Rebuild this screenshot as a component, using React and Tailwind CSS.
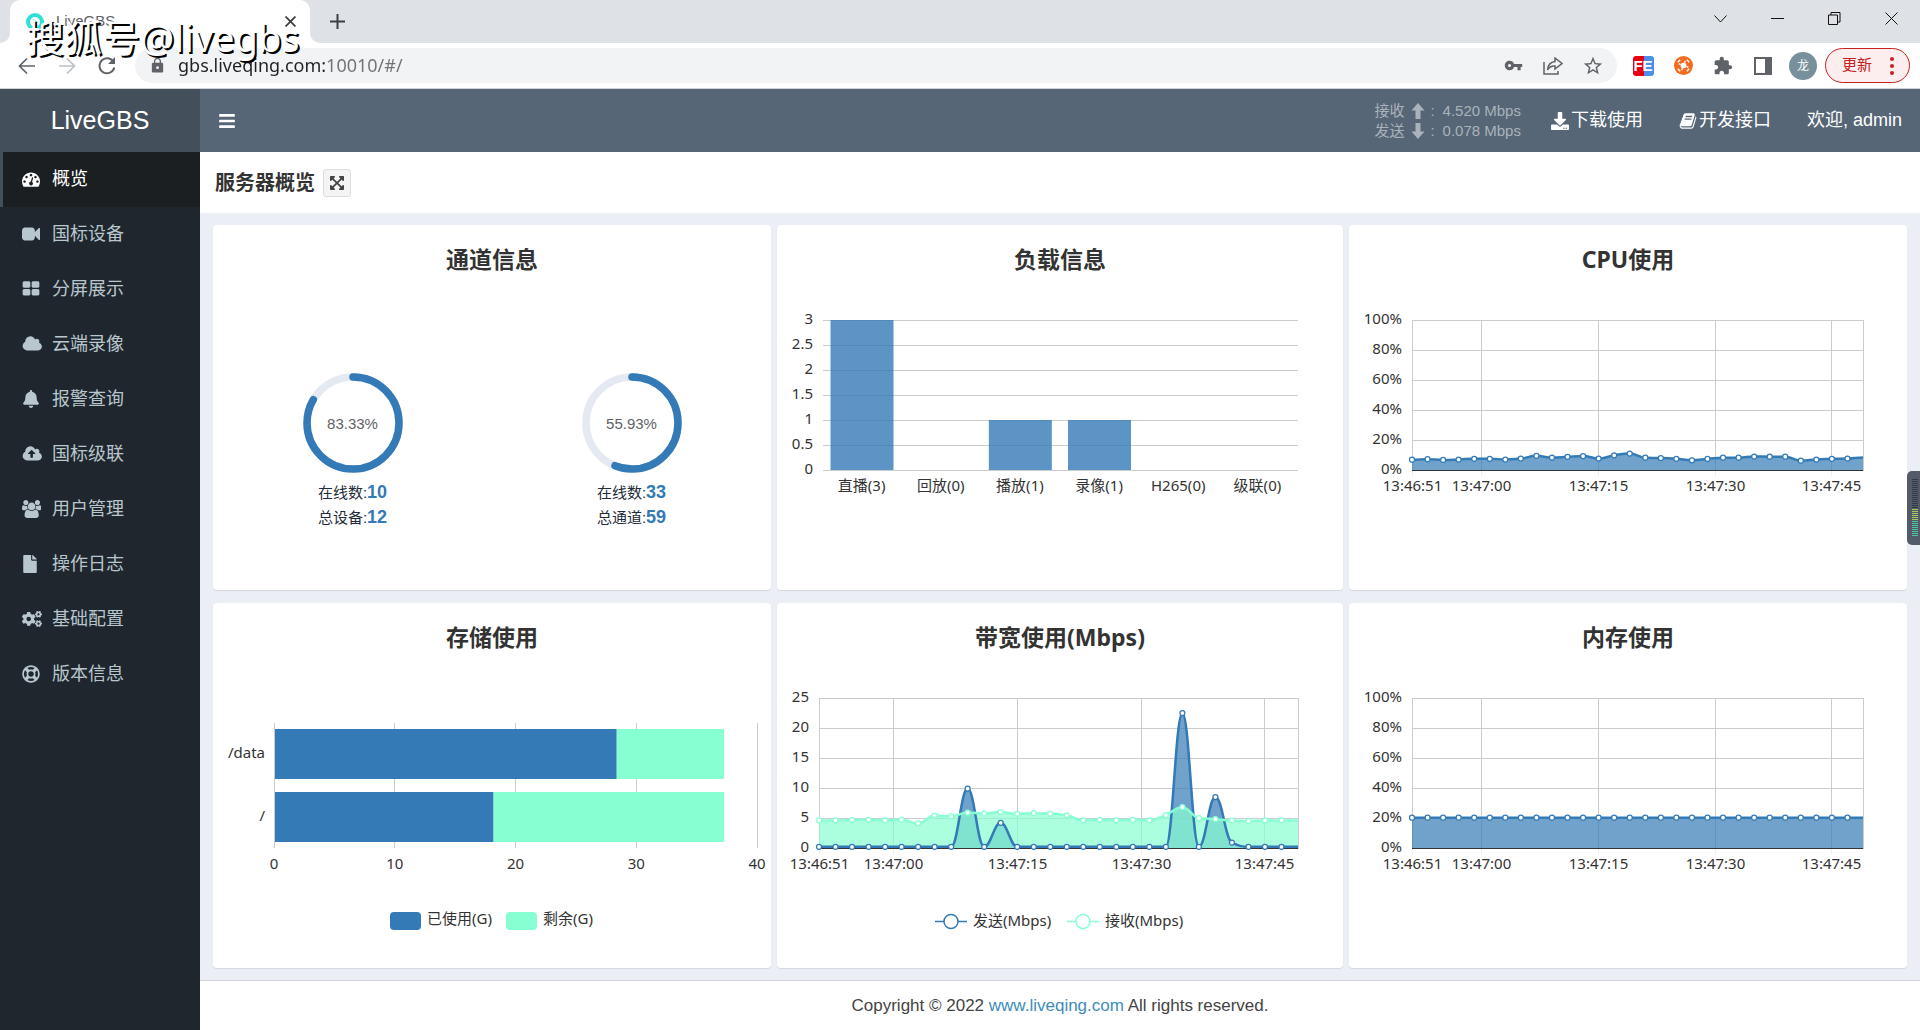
import { FaBars, FaBell, FaCogs, FaDownload, FaExpandArrowsAlt, FaFile, FaRegLifeRing } from "react-icons/fa";
import { MdExtension, MdLock, MdStarBorder, MdVpnKey } from "react-icons/md";

const BLUE = "#337ab7";
const MINT = "#87ffd2";
const GRID = "#cccccc";

/* ---------- Icons ---------- */

const CLOUD =
  "M1984 1152q0 159-112.5 271.5t-271.5 112.5h-1088q-185 0-316.5-131.5t-131.5-316.5q0-132 71-241.5t187-163.5q-2-28-2-43 0-212 150-362t362-150q158 0 286.5 88t187.5 230q70-62 166-62 106 0 181 75t75 181q0 75-41 138 129 30 213 134.5t84 239.5z";

const PATHS = {
  dashboard:
    "M384 1152q0-53-37.5-90.5t-90.5-37.5-90.5 37.5-37.5 90.5 37.5 90.5 90.5 37.5 90.5-37.5 37.5-90.5zm192-448q0-53-37.5-90.5t-90.5-37.5-90.5 37.5-37.5 90.5 37.5 90.5 90.5 37.5 90.5-37.5 37.5-90.5zm428 481l101-382q6-26-7.5-48.5t-38.5-29.5-48 6.5-30 39.5l-101 382q-60 5-107 43.5t-63 98.5q-20 77 20 146t117 89 146-20 89-117q16-60-6-117t-72-91zm660-33q0-53-37.5-90.5t-90.5-37.5-90.5 37.5-37.5 90.5 37.5 90.5 90.5 37.5 90.5-37.5 37.5-90.5zm-640-640q0-53-37.5-90.5t-90.5-37.5-90.5 37.5-37.5 90.5 37.5 90.5 90.5 37.5 90.5-37.5 37.5-90.5zm448 192q0-53-37.5-90.5t-90.5-37.5-90.5 37.5-37.5 90.5 37.5 90.5 90.5 37.5 90.5-37.5 37.5-90.5zm320 448q0 261-141 483-19 29-54 29h-1402q-35 0-54-29-141-221-141-483 0-182 71-348t191-286 286-191 348-71 348 71 286 191 191 286 71 348z",
  video:
    "M1792 352v1088q0 42-39 59-13 5-25 5-27 0-45-19l-403-403v166q0 119-84.5 203.5t-203.5 84.5h-704q-119 0-203.5-84.5t-84.5-203.5v-704q0-119 84.5-203.5t203.5-84.5h704q119 0 203.5 84.5t84.5 203.5v165l403-402q18-19 45-19 12 0 25 5 39 17 39 59z",
  thLarge:
    "M832 1024v384q0 52-38 90t-90 38h-512q-52 0-90-38t-38-90v-384q0-52 38-90t90-38h512q52 0 90 38t38 90zm0-768v384q0 52-38 90t-90 38h-512q-52 0-90-38t-38-90v-384q0-52 38-90t90-38h512q52 0 90 38t38 90zm896 768v384q0 52-38 90t-90 38h-512q-52 0-90-38t-38-90v-384q0-52 38-90t90-38h512q52 0 90 38t38 90zm0-768v384q0 52-38 90t-90 38h-512q-52 0-90-38t-38-90v-384q0-52 38-90t90-38h512q52 0 90 38t38 90z",
  cloud: CLOUD,
  cloudUpload:
    "M1344 864q0-14-9-23l-352-352q-9-9-23-9t-23 9l-351 351q-10 12-10 24 0 14 9 23t23 9h224v352q0 13 9.5 22.5t22.5 9.5h192q13 0 22.5-9.5t9.5-22.5v-352h224q13 0 22.5-9.5t9.5-22.5z" +
    CLOUD,
  users:
    "M593 896q-162 5-265 128h-134q-82 0-138-40.5t-56-118.5q0-353 124-353 6 0 43.5 21t97.5 42.5 119 21.5q67 0 133-23-5 37-5 66 0 139 81 256zm1071 637q0 120-73 189.5t-194 69.5h-874q-121 0-194-69.5t-73-189.5q0-53 3.5-103.5t14-109 26.5-108.5 43-97.5 62-81 85.5-53.5 111.5-20q10 0 43 21.5t73 48 107 48 135 21.5 135-21.5 107-48 73-48 43-21.5q61 0 111.5 20t85.5 53.5 62 81 43 97.5 26.5 108.5 14 109 3.5 103.5zm-1024-1277q0 106-75 181t-181 75-181-75-75-181 75-181 181-75 181 75 75 181zm704 384q0 159-112.5 271.5t-271.5 112.5-271.5-112.5-112.5-271.5 112.5-271.5 271.5-112.5 271.5 112.5 112.5 271.5zm576 225q0 78-56 118.5t-138 40.5h-134q-103-123-265-128 81-117 81-256 0-29-5-66 66 23 133 23 59 0 119-21.5t97.5-42.5 43.5-21q124 0 124 353zm-128-609q0 106-75 181t-181 75-181-75-75-181 75-181 181-75 181 75 75 181z",
  book: "M1703 478q40 57 18 129l-275 906q-19 64-76.5 107.5t-122.5 43.5h-923q-77 0-148.5-53.5t-99.5-131.5q-24-67-2-127 0-4 3-27t4-37q1-8-3-21.5t-3-19.5q2-11 8-21t16.5-23.5 16.5-23.5q23-38 45-91.5t30-91.5q3-10 .5-30t-.5-28q3-11 17-28t17-23q21-36 42-92t25-90q1-9-2.5-32t.5-28q4-13 22-30.5t22-22.5q19-26 42.5-84.5t27.5-96.5q1-8-3-25.5t-2-26.5q2-8 9-18t18-23 17-21q8-12 16.5-30.5t15-35 16-36 19.5-32 26.5-23.5 36-11.5 47.5 5.5l-1 3q38-9 51-9h761q74 0 114 56t18 130l-274 906q-36 119-71.5 153.5t-128.5 34.5h-869q-27 0-38 15-11 16-1 43 24 70 144 70h923q29 0 56-15.5t35-41.5l300-987q7-22 5-57 38 15 59 43zm-1064 2q-4 13 2 22.5t20 9.5h608q13 0 25.5-9.5t16.5-22.5l21-64q4-13-2-22.5t-20-9.5h-608q-13 0-25.5 9.5t-16.5 22.5zm-83 256q-4 13 2 22.5t20 9.5h608q13 0 25.5-9.5t16.5-22.5l21-64q4-13-2-22.5t-20-9.5h-608q-13 0-25.5 9.5t-16.5 22.5z",
};

const Glyph = ({ name, wide = 1792, className = "h-[18px]" }) => (
  <svg viewBox={`0 0 ${wide} 1792`} fill="currentColor" fillRule="evenodd" className={className} aria-hidden="true">
    <path d={PATHS[name]} />
  </svg>
);

const FatArrow = ({ down = false }) => (
  <svg viewBox="0 0 14 16" fill="currentColor" className={down ? "h-4 w-3.5 rotate-180" : "h-4 w-3.5"} aria-hidden="true">
    <path d="M7 0L13.5 7.5H9.5V16H4.5V7.5H.5Z" />
  </svg>
);

/* ---------- Browser frame ---------- */

const WINDOW_BUTTONS = [
  { label: "搜索标签页", d: "M.5 3.5L6.5 10L12.5 3.5" },
  { label: "最小化", d: "M0 6.5H13" },
  { label: "还原", d: "M.5 3H9.5V12.5H.5ZM3 3V.5H12V10H9.5" },
  { label: "关闭", d: "M.5 .5L12.5 12.5M12.5 .5L.5 12.5" },
];

const TabStrip = () => (
  <div className="flex h-[43px] items-stretch bg-[#dee1e6]">
    <span className="w-2.5 bg-white">
      <span className="block h-full rounded-br-[10px] bg-[#dee1e6]" />
    </span>
    <div className="flex w-[300px] items-center rounded-t-[10px] bg-white pr-2.5 pl-4">
      <svg viewBox="0 0 18 18" className="h-[18px] w-[18px]" aria-hidden="true">
        <circle cx="9" cy="9" r="7" fill="none" stroke="#2ee0d8" strokeWidth="4" />
        <path d="M7 6L12 9L7 12Z" fill="#2ee0d8" />
      </svg>
      <span className="ml-3 flex-1 text-[15px] text-[#5f6368]">LiveGBS</span>
      <button aria-label="关闭标签页" className="flex h-5 w-5 items-center justify-center">
        <svg viewBox="0 0 10 10" className="h-[11px] w-[11px]" stroke="#3c4043" strokeWidth="1.6">
          <path d="M.5 .5L9.5 9.5M9.5 .5L.5 9.5" />
        </svg>
      </button>
    </div>
    <span className="w-2.5 bg-white">
      <span className="block h-full rounded-bl-[10px] bg-[#dee1e6]" />
    </span>
    <button aria-label="新标签页" className="flex w-[34px] items-center justify-center">
      <svg viewBox="0 0 15 15" className="h-[15px] w-[15px]" stroke="#3c4043" strokeWidth="2">
        <path d="M7.5 0V15M0 7.5H15" />
      </svg>
    </button>
    <div className="ml-auto flex h-[37px]">
      {WINDOW_BUTTONS.map((b) => (
        <button key={b.label} aria-label={b.label} className="flex w-[57px] items-center justify-center">
          <svg viewBox="0 0 13 13" className="h-[13px] w-[13px]" fill="none" stroke="#111" strokeWidth="1">
            <path d={b.d} />
          </svg>
        </button>
      ))}
    </div>
  </div>
);

const ToolButton = ({ label, children }) => (
  <button aria-label={label} className="flex h-9 w-10 shrink-0 items-center justify-center text-[#5f6368]">
    {children}
  </button>
);

const Toolbar = () => (
  <div className="flex h-[46px] items-center border-b border-[#d0d2d5] bg-white pr-2.5 pl-[7px]">
    <ToolButton label="后退">
      <svg viewBox="0 0 18 18" className="h-[18px] w-[18px]" fill="none" stroke="currentColor" strokeWidth="1.7">
        <path d="M17 9H2M9 1.5L1.5 9L9 16.5" />
      </svg>
    </ToolButton>
    <ToolButton label="前进">
      <svg viewBox="0 0 18 18" className="h-[18px] w-[18px]" fill="none" stroke="#bdc1c6" strokeWidth="1.7">
        <path d="M1 9H16M9 1.5L16.5 9L9 16.5" />
      </svg>
    </ToolButton>
    <ToolButton label="重新加载">
      <svg viewBox="0 0 18 18" className="h-[18px] w-[18px]" fill="none" stroke="currentColor" strokeWidth="2">
        <path d="M15.5 5A7.5 7.5 0 1 0 16.3 10.5" />
        <path d="M17 0V7H10Z" fill="currentColor" stroke="none" />
      </svg>
    </ToolButton>
    <div className="ml-2 flex h-[35px] flex-1 items-center rounded-full bg-[#f1f3f4] pr-1 pl-3.5">
      <MdLock className="h-[17px] w-[17px] text-[#5f6368]" />
      <input
        aria-label="地址栏"
        defaultValue="gbs.liveqing.com:10010/#/"
        className="ml-3 min-w-0 flex-1 bg-[linear-gradient(90deg,#202124_147px,#6f7377_147px)] bg-clip-text font-['Noto_Sans','Noto_Sans_CJK_SC',sans-serif] text-[18px] text-transparent outline-none"
      />
      <ToolButton label="密码">
        <MdVpnKey className="h-[19px] w-[19px]" />
      </ToolButton>
      <ToolButton label="分享">
        <svg viewBox="0 0 20 18" className="h-[18px] w-5" fill="none" stroke="currentColor" strokeWidth="1.5">
          <path d="M1 5V17H15V14M12 1L19 6.5L12 12V9Q7 8.5 4.5 13Q5 5.5 12 4.5Z" />
        </svg>
      </ToolButton>
      <ToolButton label="收藏">
        <MdStarBorder className="h-[22px] w-[22px]" />
      </ToolButton>
    </div>
    <div className="ml-1.5 flex">
      <ToolButton label="FE助手">
        <span className="flex h-5 w-[21px] items-center justify-center rounded-[3px] bg-[linear-gradient(90deg,#e60012_50%,#4a90e8_50%)] text-[15px] leading-none font-bold text-white">
          FE
        </span>
      </ToolButton>
      <ToolButton label="扩展">
        <svg viewBox="0 0 20 20" className="h-[19px] w-[19px]">
          <circle cx="10" cy="10" r="10" fill="#f26b21" />
          <circle cx="10" cy="10" r="3" fill="#fff" />
          <path
            d="M4 6.5L6.5 4M13.5 4L16 6.5M4 13.5L6.5 16M13.5 16L16 13.5M5 8L7 9M15 12L13 11M12 5L11 7M8 15L9 13"
            stroke="#fff"
            strokeWidth="1.5"
          />
        </svg>
      </ToolButton>
      <ToolButton label="扩展程序">
        <MdExtension className="h-5 w-5" />
      </ToolButton>
      <ToolButton label="侧边栏">
        <svg viewBox="0 0 18 18" className="h-[18px] w-[18px]" fill="none" stroke="currentColor" strokeWidth="2">
          <path d="M1 1H17V17H1Z" />
          <path d="M12 1H17V17H12Z" fill="currentColor" />
        </svg>
      </ToolButton>
      <ToolButton label="用户">
        <span className="flex h-7 w-7 items-center justify-center rounded-full bg-[#78909c] text-[12px] text-white">龙</span>
      </ToolButton>
    </div>
    <button className="ml-0.5 flex h-[35px] w-[85px] items-center gap-[18px] rounded-full border border-[#c5221f] bg-[#fceeee] pl-4 text-[15px] text-[#c5221f]">
      更新
      <svg viewBox="0 0 4 18" className="h-[18px] w-1" fill="currentColor" aria-hidden="true">
        <circle cx="2" cy="2" r="2" />
        <circle cx="2" cy="9" r="2" />
        <circle cx="2" cy="16" r="2" />
      </svg>
    </button>
  </div>
);

/* ---------- Sidebar ---------- */

const MENU = [
  { label: "概览", icon: <Glyph name="dashboard" />, active: true },
  { label: "国标设备", icon: <Glyph name="video" /> },
  { label: "分屏展示", icon: <Glyph name="thLarge" /> },
  { label: "云端录像", icon: <Glyph name="cloud" wide={2048} /> },
  { label: "报警查询", icon: <FaBell className="h-[18px] w-[18px]" /> },
  { label: "国标级联", icon: <Glyph name="cloudUpload" wide={2048} /> },
  { label: "用户管理", icon: <Glyph name="users" wide={1920} /> },
  { label: "操作日志", icon: <FaFile className="h-[18px] w-4" /> },
  { label: "基础配置", icon: <FaCogs className="h-[18px] w-5" /> },
  { label: "版本信息", icon: <FaRegLifeRing className="h-[18px] w-[18px]" /> },
];

const Sidebar = () => (
  <aside className="w-[200px] shrink-0 bg-[#20262d]">
    <a href="#/" className="flex h-[63px] items-center justify-center bg-[#434f5a] text-[25px] text-white">
      LiveGBS
    </a>
    <nav>
      <ul>
        {MENU.map((m) => (
          <li key={m.label}>
            <a
              href="#/"
              className={
                m.active
                  ? "flex h-[55px] items-center border-l-3 border-[#434f5a] bg-[#1b1f22] pl-[19px] text-[18px] text-white"
                  : "flex h-[55px] items-center border-l-3 border-transparent pl-[19px] text-[18px] text-[#b8c7ce]"
              }
            >
              <span className="w-[30px] pb-0.5">{m.icon}</span>
              {m.label}
            </a>
          </li>
        ))}
      </ul>
    </nav>
  </aside>
);

/* ---------- Top bar ---------- */

const RateRow = ({ label, down, value }) => (
  <div className="flex items-center">
    <span>{label}</span>
    <span className="mx-1.5">
      <FatArrow down={down} />
    </span>
    <span className="w-3">:</span>
    <span>{value}</span>
  </div>
);

const TopBar = () => (
  <header className="flex h-[63px] items-center bg-[#566676] text-[18px] text-white">
    <button aria-label="切换菜单" className="flex h-full w-[53px] items-center justify-center">
      <FaBars className="h-[18px] w-[18px]" />
    </button>
    <div className="ml-auto text-[15px] leading-5 text-[#aab3bb]">
      <RateRow label="接收" value="4.520 Mbps" />
      <RateRow label="发送" down value="0.078 Mbps" />
    </div>
    <a href="#/" className="ml-3 flex items-center gap-0.5 px-[18px]">
      <FaDownload className="h-[18px] w-[18px]" />
      下载使用
    </a>
    <a href="#/" className="flex items-center gap-0.5 px-[18px]">
      <Glyph name="book" />
      开发接口
    </a>
    <a href="#/" className="px-[18px]">
      欢迎, admin
    </a>
  </header>
);

/* ---------- Charts ---------- */

const Card = ({ title, children }) => (
  <section className="flex h-[365px] flex-col rounded-[4px] bg-white shadow-[0_1px_1px_rgba(0,0,0,0.1)]">
    <h2 className="pb-0.5 text-center font-['Noto_Sans','Noto_Sans_CJK_SC',sans-serif] text-[23px] leading-[68px] font-bold text-[#333]">
      {title}
    </h2>
    {children}
  </section>
);

const Chart = ({ width, label, children }) => (
  <svg
    viewBox={`0 0 ${width} 295`}
    role="img"
    aria-label={label}
    className="min-h-0 w-full flex-1 fill-[#333] font-['Noto_Sans','Noto_Sans_CJK_SC',sans-serif] text-[15px]"
  >
    {children}
  </svg>
);

const ProgressRing = ({ percent }) => {
  const length = 2 * Math.PI * 46;
  return (
    <div className="grid h-[100px] w-[100px] place-items-center">
      <svg
        viewBox="0 0 100 100"
        className="col-start-1 row-start-1 -rotate-90"
        fill="none"
        strokeWidth="7.5"
        aria-hidden="true"
      >
        <circle cx="50" cy="50" r="46" stroke="#e5e9f2" />
        <circle
          cx="50"
          cy="50"
          r="46"
          stroke={BLUE}
          strokeLinecap="round"
          strokeDasharray={`${(length * percent) / 100} ${length}`}
        />
      </svg>
      <span className="col-start-1 row-start-1 text-[15px] text-[#606266]">{percent}%</span>
    </div>
  );
};

const RingBlock = ({ percent, online, totalLabel, total }) => (
  <div className="flex flex-col items-center text-[15px] leading-[25px] text-[#1f2d3d]">
    <ProgressRing percent={percent} />
    <p className="mt-[7px]">
      在线数:<b className="text-[18px] text-[#337ab7]">{online}</b>
    </p>
    <p>
      {totalLabel}:<b className="text-[18px] text-[#337ab7]">{total}</b>
    </p>
  </div>
);

const LOAD = [
  ["直播", 3],
  ["回放", 0],
  ["播放", 1],
  ["录像", 1],
  ["H265", 0],
  ["级联", 0],
];

const LoadChart = () => {
  const step = 475 / LOAD.length;
  return (
    <Chart width={566} label="负载信息">
      {[3, 2.5, 2, 1.5, 1, 0.5, 0].map((v, i) => (
        <g key={v}>
          <path d={`M46 ${25.5 + i * 25}H521`} stroke={GRID} />
          <text x="36" y={29 + i * 25} textAnchor="end">
            {v}
          </text>
        </g>
      ))}
      {LOAD.map(([name, count], i) => (
        <g key={name}>
          <rect x={53.5 + i * step} y={175 - count * 50} width="63" height={count * 50} fill={BLUE} opacity="0.8" />
          <text x={45 + step * (i + 0.5)} y="196" textAnchor="middle">
            {name}({count})
          </text>
        </g>
      ))}
    </Chart>
  );
};

// Cubic path that never overshoots its points
const smoothPath = (pts) => {
  const slope = pts.slice(1).map((p, i) => (p[1] - pts[i][1]) / (p[0] - pts[i][0]));
  const tangent = pts.map((_, i) => {
    const a = slope[i - 1] ?? 0;
    const b = slope[i] ?? 0;
    return a * b <= 0 ? 0 : (2 * a * b) / (a + b);
  });
  return pts
    .map(([x, y], i) => {
      if (i === 0) return `M${x} ${y}`;
      const [px, py] = pts[i - 1];
      const dx = (x - px) / 2.4;
      return `C${px + dx} ${py + tangent[i - 1] * dx} ${x - dx} ${y - tangent[i] * dx} ${x} ${y}`;
    })
    .join("");
};

// All areas go below all lines, so no line is tinted by a later area
const SeriesGroup = ({ series, left, right, max }) => {
  const drawn = series.map(({ color, data }) => {
    const pts = data.map((v, i) => [left + (i * (right - left)) / (data.length - 1), 175 - (v / max) * 150]);
    return { color, pts, line: smoothPath(pts) };
  });
  return (
    <g>
      {drawn.map(({ color, line }) => (
        <path key={color} d={`${line}V175H${left}Z`} fill={color} opacity="0.7" />
      ))}
      <path d={`M${left} 175.5H${right}`} stroke="#333" />
      {drawn.map(({ color, line, pts }) => (
        <g key={color} stroke={color}>
          <path d={line} fill="none" strokeWidth="2.5" />
          {pts.slice(0, -1).map(([x, y]) => (
            <circle key={x} cx={x} cy={y} r="2.5" fill="#fff" strokeWidth="1.25" />
          ))}
        </g>
      ))}
    </g>
  );
};

// Seconds after 13:46:51
const TIMES = [
  [0, "13:46:51"],
  [9, "13:47:00"],
  [24, "13:47:15"],
  [39, "13:47:30"],
  [54, "13:47:45"],
];

const TimeGrid = ({ left, right, labels }) => {
  const at = (s) => Math.floor(left + (s * (right - left)) / 58) + 0.5;
  const step = 150 / (labels.length - 1);
  return (
    <g>
      {labels.map((l, i) => (
        <g key={l}>
          <path d={`M${left} ${25.5 + i * step}H${right}`} stroke={GRID} />
          <text x={left - 10} y={29 + i * step} textAnchor="end">
            {l}
          </text>
        </g>
      ))}
      {TIMES.map(([s, t]) => (
        <g key={t}>
          <path d={`M${at(s)} 25V175`} stroke={GRID} />
          <path d={`M${at(s)} 176V181`} stroke="#eee" />
          <text x={at(s)} y="196" textAnchor="middle">
            {t}
          </text>
        </g>
      ))}
      <path d={`M${right + 0.5} 25V176`} stroke={GRID} />
    </g>
  );
};

const PERCENTS = ["100%", "80%", "60%", "40%", "20%", "0%"];
const CPU = [
  6.9, 7.2, 6.7, 7, 7.5, 7.5, 7, 7.6, 9.5, 8.3, 8.8, 9.3, 7.6, 9.8, 11, 8.2, 8, 7.5, 6.5, 7.4, 8.2, 8.2, 9, 8.9, 8.9, 6.2, 7,
  7.5, 7.6, 8.3,
];
const MEMORY = Array(30).fill(20.2);
const SEND = [
  0.2, 0.2, 0.2, 0.2, 0.2, 0.2, 0.2, 0.2, 0.2, 9.9, 0.2, 4.2, 0.2, 0.2, 0.2, 0.2, 0.2, 0.2, 0.2, 0.2, 0.2, 0.2, 22.5, 0.2, 8.5,
  0.9, 0.2, 0.2, 0.2, 0.2,
];
const RECEIVE = [
  4.6, 4.6, 4.65, 4.7, 4.6, 4.7, 4.1, 5.4, 5.3, 5.9, 5.75, 6, 5.7, 5.8, 5.7, 5.45, 4.6, 4.7, 4.6, 4.7, 4.6, 5.5, 6.8, 5, 4.8,
  4.6, 4.5, 4.6, 4.6, 4.6,
];

const PercentChart = ({ label, data }) => (
  <Chart width={558} label={label}>
    <TimeGrid left={63} right={514} labels={PERCENTS} />
    <SeriesGroup series={[{ color: BLUE, data }]} left={63} right={514} max={100} />
  </Chart>
);

const LineLegend = ({ x, color, children }) => (
  <g>
    <path d={`M${x} 248.5H${x + 32}`} stroke={color} strokeWidth="1.5" />
    <circle cx={x + 16} cy="248.5" r="7" fill="#fff" stroke={color} strokeWidth="1.5" />
    <text x={x + 38} y="253">
      {children}
    </text>
  </g>
);

const BandwidthChart = () => (
  <Chart width={566} label="带宽使用">
    <TimeGrid left={42} right={521} labels={["25", "20", "15", "10", "5", "0"]} />
    <SeriesGroup
      series={[
        { color: BLUE, data: SEND },
        { color: MINT, data: RECEIVE },
      ]}
      left={42}
      right={521}
      max={25}
    />
    <LineLegend x={158} color={BLUE}>
      发送(Mbps)
    </LineLegend>
    <LineLegend x={290} color={MINT}>
      接收(Mbps)
    </LineLegend>
  </Chart>
);

const DISKS = [
  { name: "/data", used: 28.3, free: 8.9 },
  { name: "/", used: 18.1, free: 19.1 },
];

const StorageChart = () => {
  const unit = 483 / 40;
  return (
    <Chart width={558} label="存储使用">
      {[0, 10, 20, 30, 40].map((v) => (
        <g key={v}>
          <path d={`M${Math.floor(61 + v * unit) + 0.5} 50V175`} stroke={GRID} />
          <text x={61 + v * unit} y="196" textAnchor="middle">
            {v}
          </text>
        </g>
      ))}
      {DISKS.map((d, i) => (
        <g key={d.name}>
          <rect x="62" y={56 + i * 63} width={d.used * unit} height="50" fill={BLUE} />
          <rect x={62 + d.used * unit} y={56 + i * 63} width={d.free * unit} height="50" fill={MINT} />
          <text x="52" y={85 + i * 63} textAnchor="end">
            {d.name}
          </text>
        </g>
      ))}
      <rect x="177" y="239" width="31" height="18" rx="4" fill={BLUE} />
      <text x="214" y="251">
        已使用(G)
      </text>
      <rect x="293" y="239" width="31" height="18" rx="4" fill={MINT} />
      <text x="330" y="251">
        剩余(G)
      </text>
    </Chart>
  );
};

/* ---------- Page ---------- */

const LevelMeter = () => (
  <div
    className="absolute top-[471px] right-0 flex h-[74px] w-[13px] flex-col gap-px rounded-l-[5px] bg-[#535a68] pt-2 pl-[5px]"
    aria-hidden="true"
  >
    {Array.from({ length: 29 }, (_, i) => (
      <span
        key={i}
        className={
          i < 15 ? "h-px w-1.5 bg-[#343947]" : i < 21 ? "h-px w-1.5 bg-[#a5c95a]" : "h-px w-1.5 bg-[#4cc5a5]"
        }
      />
    ))}
  </div>
);

export default function App() {
  return (
    <div className="relative flex min-h-screen flex-col bg-white font-['Liberation_Sans','Noto_Sans_CJK_SC',sans-serif] text-[#333]">
      <TabStrip />
      <Toolbar />
      <div className="flex flex-1">
        <Sidebar />
        <div className="flex min-w-0 flex-1 flex-col bg-[#ebeef4]">
          <TopBar />
          <div className="flex h-[61px] items-center gap-2 bg-white px-[15px]">
            <h1 className="text-[20px] font-bold">服务器概览</h1>
            <button
              aria-label="全屏"
              className="flex h-7 w-7 items-center justify-center rounded-[3px] border border-[#ddd] bg-[#f4f4f4] text-[#444]"
            >
              <FaExpandArrowsAlt className="h-4 w-4" />
            </button>
          </div>
          <main className="grid grid-cols-[558fr_566fr_558fr] gap-x-1.5 gap-y-[13px] px-[13px] py-3">
            <Card title="通道信息">
              <div className="mt-[78px] grid grid-cols-2">
                <RingBlock percent={83.33} online={10} totalLabel="总设备" total={12} />
                <RingBlock percent={55.93} online={33} totalLabel="总通道" total={59} />
              </div>
            </Card>
            <Card title="负载信息">
              <LoadChart />
            </Card>
            <Card title="CPU使用">
              <PercentChart label="CPU使用" data={CPU} />
            </Card>
            <Card title="存储使用">
              <StorageChart />
            </Card>
            <Card title="带宽使用(Mbps)">
              <BandwidthChart />
            </Card>
            <Card title="内存使用">
              <PercentChart label="内存使用" data={MEMORY} />
            </Card>
          </main>
          <footer className="flex flex-1 items-center justify-center border-t border-[#d2d6de] bg-white text-[17px] text-[#444]">
            <p>
              Copyright © 2022{" "}
              <a href="https://www.liveqing.com" className="text-[#3c8dbc]">
                www.liveqing.com
              </a>{" "}
              All rights reserved.
            </p>
          </footer>
        </div>
      </div>
      <LevelMeter />
      <div className="pointer-events-none absolute top-[13px] left-[26px] font-['Noto_Sans','Noto_Sans_CJK_SC',sans-serif] text-[38px] leading-[48px] text-white [text-shadow:2px_2px_0_#000]">
        搜狐号@livegbs
      </div>
    </div>
  );
}
